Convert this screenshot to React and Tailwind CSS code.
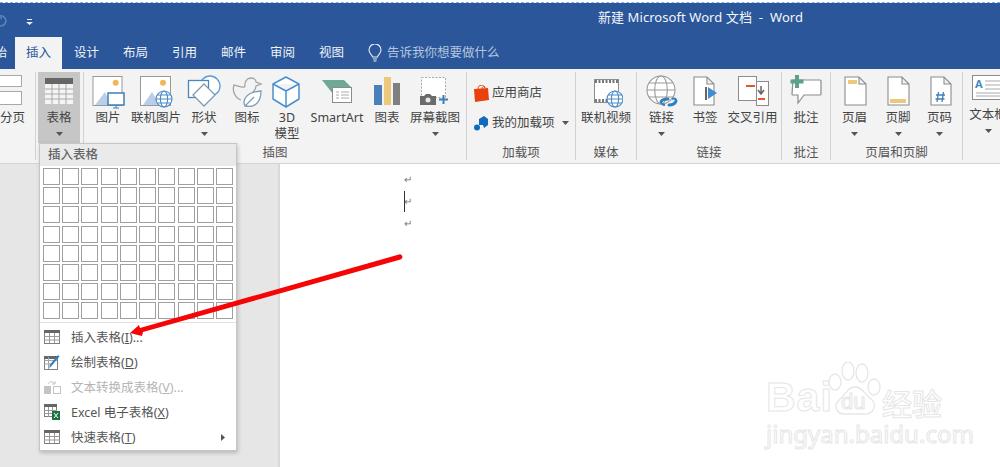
import React from "react";

const tabs = ["设计", "布局", "引用", "邮件", "审阅", "视图"];
const rows = Array.from({ length: 80 });

const Caret = ({ className = "" }) => (
  <svg width="7" height="4" viewBox="0 0 7 4" className={className}>
    <path d="M0 0h7L3.5 4z" fill="#555" />
  </svg>
);

const Icon = ({ children, w = 34 }) => (
  <svg width={w} height="34" viewBox={`0 0 ${w} 34`} className="mb-[1px] shrink-0">
    {children}
  </svg>
);

const Globe = ({ x, y, r, color = "#4a8ac9" }) => (
  <g fill="#fff" stroke={color} strokeWidth="1.1">
    <circle cx={x} cy={y} r={r} />
    <ellipse cx={x} cy={y} rx={r * 0.45} ry={r} fill="none" />
    <path d={`M${x - r} ${y}h${r * 2}M${x - r * 0.85} ${y - r * 0.5}h${r * 1.7}M${x - r * 0.85} ${y + r * 0.5}h${r * 1.7}`} fill="none" />
  </g>
);

const Doc = ({ x = 7, w = 21 }) => (
  <path d={`M${x} 2h${w - 7}l7 7v21h-${w}z M${x + w - 7} 2v7h7`} fill="#fff" stroke="#8c8c8c" strokeWidth="1.1" />
);

const RibbonItem = ({ className, label, line2, caret, icon }) => (
  <div className={`flex flex-col items-center pt-[3px] text-[12.5px] leading-[16px] text-[#444] whitespace-nowrap ${className}`}>
    {icon}
    <span>{label}</span>
    {line2 && <span>{line2}</span>}
    {caret && <Caret className="mt-[6px]" />}
  </div>
);

const Group = ({ className, label, children }) => (
  <div className={`my-[3px] flex flex-col border-r border-[#d2d2d2] shrink-0 ${className}`}>
    <div className="flex h-[73px]">{children}</div>
    <div className="h-[15px] text-center text-[12.5px] leading-[16px] text-[#555] whitespace-nowrap">{label}</div>
  </div>
);

const TableGlyph = () => (
  <svg width="16" height="14" viewBox="0 0 16 14">
    <rect x="0.5" y="0.5" width="15" height="13" fill="#fff" stroke="#7f7f7f" />
    <rect x="0" y="0" width="16" height="3" fill="#666" />
    <path d="M5.5 3v10M10.5 3v10M0 6.5h16M0 10h16" stroke="#9a9a9a" />
  </svg>
);

const MenuItem = ({ icon, disabled, children, arrow }) => (
  <div className={`flex h-[25px] items-center text-[12.5px] ${disabled ? "text-[#b5b5b5]" : "text-[#555]"}`}>
    <div className="flex w-[31px] justify-start pl-[4px]">{icon}</div>
    <span className="whitespace-nowrap pt-[2px]">{children}</span>
    {arrow && (
      <svg width="4" height="7" viewBox="0 0 4 7" className="ml-auto mr-[11px]">
        <path d="M0 0l4 3.5L0 7z" fill="#555" />
      </svg>
    )}
  </div>
);

export default function App() {
  return (
    <div className="relative flex h-[467px] w-[1000px] flex-col overflow-hidden bg-white font-['Noto_Sans','Noto_Sans_CJK_SC',sans-serif]">
      {/* title bar */}
      <div className="h-[3px] shrink-0 border-b border-dashed border-[#7fb3e6] bg-white" />
      <div className="relative flex h-[34px] shrink-0 items-center bg-[#2b579a] pb-[4px] pl-[598px] text-[13px] tracking-[0.07px] text-[#f2f5fa] whitespace-pre">
        <svg width="9" height="13" viewBox="0 0 9 13" className="absolute left-0 top-[11px]">
          <path d="M0 2a5 5 0 1 1-2 9" fill="none" stroke="#5f82b8" strokeWidth="1.6" />
          <path d="M-2 0v4h4" fill="none" stroke="#5f82b8" strokeWidth="1.4" />
        </svg>
        <svg width="7" height="6" viewBox="0 0 7 6" className="absolute left-[26px] top-[16px]">
          <path d="M1 0h5v1H1zM0 3h7L3.5 6z" fill="#e8eef6" />
        </svg>
        新建 Microsoft Word 文档  -  Word
      </div>

      {/* tabs */}
      <div className="flex h-[32px] shrink-0 items-center bg-[#2b579a] text-[12.5px] text-[#f0f3f8]">
        <div className="flex h-full w-[15px] items-center justify-end overflow-hidden whitespace-nowrap pr-[8px]">开始</div>
        <div className="flex h-full w-[47px] items-center justify-center bg-[#f3f3f3] text-[#2b579a]">插入</div>
        {tabs.map((t) => (
          <div key={t} className="w-[49px] text-center">{t}</div>
        ))}
        <svg width="14" height="19" viewBox="0 0 14 19" className="ml-[12px]">
          <path d="M4.5 13C4 10.5 1 9.5 1 6a6 6 0 0 1 12 0c0 3.500-3 4.500-3.500 7z" fill="none" stroke="#e8eef6" strokeWidth="1.1" />
          <path d="M5 15h4M5.500 17h3" stroke="#e8eef6" strokeWidth="1.2" />
        </svg>
        <span className="ml-[5px] text-[#b4c5df]">告诉我你想要做什么</span>
      </div>

      {/* ribbon */}
      <div className="flex h-[95px] shrink-0 border-b border-[#d4d4d4] bg-[#f3f3f3]">
        <Group className="w-[36px]">
          <div className="flex w-[35px] flex-col pt-[3px] text-[12.5px] leading-[16px] text-[#444]">
            <div className="h-[12px] w-[22px] border border-l-0 border-[#a8a8a8] bg-white" />
            <div className="mt-[4px] h-[14px] w-[22px] border border-l-0 border-[#a8a8a8] bg-white" />
            <span className="mt-[5px] whitespace-nowrap">分页</span>
          </div>
        </Group>

        <Group className="w-[48px]">
          <div className="ml-[2px] flex h-[71px] w-[42px] flex-col items-center bg-[#c6c6c6] pt-[6px] text-[12.5px] leading-[16px] text-[#444]">
            <svg width="28" height="26" viewBox="0 0 28 26">
              <rect width="28" height="26" fill="#f4f4f4" />
              <rect width="28" height="6" fill="#666" />
              <path d="M7 6v20M14 6v20M21 6v20M0 11h28M0 16h28M0 21h28" stroke="#aaa" />
            </svg>
            <span className="mt-[6px]">表格</span>
            <Caret className="mt-[6px]" />
          </div>
        </Group>

        <Group className="w-[383px]" label="插图">
          <RibbonItem className="w-[48px]" label="图片" icon={
            <Icon>
              <rect x="2" y="1.500" width="29" height="29" fill="#fff" stroke="#999" />
              <circle cx="24.700" cy="7.700" r="3" fill="#efb75c" />
              <path d="M4 30l10-13 6 13z" fill="#b9cfe9" />
              <rect x="17" y="18" width="16" height="12" fill="#fff" stroke="#3f7fb8" strokeWidth="1.500" />
              <path d="M25 30v3M22 33h6" stroke="#3f7fb8" />
            </Icon>
          } />
          <RibbonItem className="w-[48px]" label="联机图片" icon={
            <Icon>
              <rect x="1.500" y="1.500" width="30" height="29" fill="#fff" stroke="#999" />
              <circle cx="24" cy="7.700" r="3" fill="#efb75c" />
              <path d="M4 30l9-13 8 13z" fill="#b9cfe9" />
              <Globe x={25} y={24} r={8} />
            </Icon>
          } />
          <RibbonItem className="w-[48px]" label="形状" caret icon={
            <Icon>
              <circle cx="23" cy="11" r="10" fill="#fff" stroke="#5b9bd5" strokeWidth="1.300" />
              <rect x="1.500" y="5.500" width="20" height="17" fill="#fff" stroke="#4a86c0" strokeWidth="1.300" />
              <path d="M17 9l11 11-11 11-11-11z" fill="#fff" stroke="#8299b3" strokeWidth="1.300" />
            </Icon>
          } />
          <RibbonItem className="w-[38px]" label="图标" icon={
            <Icon>
              <path d="M15 12c-1-5 2-9 6-9 3 0 5 2 5 4l5 2-5 2c0 3-2 5-3 6M15 12c-3 1-7-1-11-2-2 6 1 13 7 15" fill="none" stroke="#a3a3a3" strokeWidth="1.300" />
              <path d="M15 31c-3-6 1-14 16-15 0 12-7 17-16 15zM15 31l9-9" fill="#fff" stroke="#7f9db3" strokeWidth="1.300" />
            </Icon>
          } />
          <RibbonItem className="w-[42px]" label="3D" line2="模型" icon={
            <Icon>
              <path d="M16 2l13 7v15l-13 8-13-8V9zM3 9l13 7 13-7M16 16v16" fill="#fff" stroke="#4a90d0" strokeWidth="1.500" strokeLinejoin="round" />
            </Icon>
          } />
          <RibbonItem className="w-[58px]" label="SmartArt" icon={
            <Icon>
              <path d="M2 5h22l7 7H13v7z" fill="#6fa896" />
              <rect x="12.500" y="12.500" width="19" height="15" fill="#fff" stroke="#8c8c8c" />
              <path d="M16 17h3M21 17h8M16 20h3M21 20h8M16 23h3M21 23h8" stroke="#aaa" />
            </Icon>
          } />
          <RibbonItem className="w-[42px]" label="图表" icon={
            <Icon>
              <rect x="4" y="10" width="8" height="20" fill="#4a7fb8" />
              <rect x="14" y="2" width="7" height="28" fill="#edc77a" />
              <rect x="23" y="8" width="7" height="22" fill="#7f7f7f" />
            </Icon>
          } />
          <RibbonItem className="w-[54px]" label="屏幕截图" caret icon={
            <Icon>
              <rect x="3.500" y="2.500" width="24" height="20" fill="#fff" stroke="#aaa" strokeDasharray="2 1.500" />
              <path d="M2 21h4l2-2h4l2 2h4v9H2z" fill="#6b6b6b" />
              <circle cx="10" cy="25" r="2.500" fill="#e8e8e8" />
              <path d="M21 24.500h9M25.500 20v9" stroke="#3f7fb8" strokeWidth="2" />
            </Icon>
          } />
        </Group>

        <Group className="w-[109px]" label="加载项">
          <div className="flex flex-col pl-[7px] pt-[11px] text-[12.5px] text-[#444]">
            <div className="flex h-[20px] items-center gap-[3px] whitespace-nowrap">
              <svg width="15" height="17" viewBox="0 0 15 17">
                <path d="M0 4l14-1 1 12-14 2z" fill="#e8410c" />
                <path d="M4 4c0-5 6-5 7-1M8 4c0-3 3-3 3-1" fill="none" stroke="#e8410c" />
              </svg>
              应用商店
            </div>
            <div className="mt-[10px] flex h-[20px] items-center gap-[3px] whitespace-nowrap">
              <svg width="15" height="15" viewBox="0 0 15 15">
                <path d="M5 3l5-3 4 3v6l-4 3-1-3H5z" fill="#0f6cbd" />
                <circle cx="3" cy="11.500" r="3" fill="#0f6cbd" />
              </svg>
              我的加载项
              <Caret className="ml-[4px]" />
            </div>
          </div>
        </Group>

        <Group className="w-[61px]" label="媒体">
          <RibbonItem className="w-[60px]" label="联机视频" icon={
            <Icon>
              <rect x="5.500" y="4.500" width="24" height="23" fill="#fff" stroke="#8c8c8c" />
              <path d="M6 6.500h23M6 25.500h23" stroke="#777" strokeWidth="3" strokeDasharray="2 1.500" />
              <Globe x={26} y={24} r={8} />
            </Icon>
          } />
        </Group>

        <Group className="w-[145px]" label="链接">
          <RibbonItem className="w-[49px]" label="链接" caret icon={
            <Icon>
              <Globe x={16} y={15} r={14} color="#999" />
              <path d="M16 27c1-3 4-3 7-3M24 30c3 0 6-1 7-4" fill="none" stroke="#2f7fc1" strokeWidth="3" strokeLinecap="round" />
              <path d="M20 30c-2 0-3-1-3-2M27 24c2-1 4 0 4 1" fill="none" stroke="#2f7fc1" strokeWidth="2" />
            </Icon>
          } />
          <RibbonItem className="w-[38px]" label="书签" icon={
            <Icon>
              <Doc x={6} w={20} />
              <path d="M18 12v13" stroke="#666" strokeWidth="2" />
              <path d="M20 12l9 6-9 6z" fill="#3f8fd0" />
            </Icon>
          } />
          <RibbonItem className="w-[57px]" label="交叉引用" icon={
            <Icon>
              <rect x="20.500" y="6.500" width="12" height="24" fill="#fff" stroke="#8c8c8c" />
              <rect x="2.500" y="1.500" width="18" height="24" fill="#fff" stroke="#8c8c8c" />
              <path d="M10 11h9M22 24h7" stroke="#e4572e" strokeWidth="2" />
              <path d="M25 11v7M22 15l3 4 3-4" fill="none" stroke="#666" strokeWidth="1.500" />
            </Icon>
          } />
        </Group>

        <Group className="w-[49px]" label="批注">
          <RibbonItem className="w-[48px]" label="批注" icon={
            <Icon>
              <path d="M4 5h27a1 1 0 0 1 1 1v13a1 1 0 0 1-1 1H15l-6 8v-8H4a1 1 0 0 1-1-1z" fill="#fff" stroke="#8c8c8c" strokeWidth="1.200" />
              <path d="M8 0v13M1.500 6.500h13" stroke="#5fa08a" strokeWidth="4" />
            </Icon>
          } />
        </Group>

        <Group className="w-[132px]" label="页眉和页脚">
          <RibbonItem className="w-[47px]" label="页眉" caret icon={
            <Icon>
              <Doc />
              <rect x="10" y="5" width="9" height="4" fill="#edc77a" />
            </Icon>
          } />
          <RibbonItem className="w-[40px]" label="页脚" caret icon={
            <Icon>
              <Doc />
              <rect x="9" y="24" width="16" height="4" fill="#edc77a" />
            </Icon>
          } />
          <RibbonItem className="w-[43px]" label="页码" caret icon={
            <Icon>
              <Doc x={8} w={20} />
              <path d="M15.500 17l-1.500 10M20.500 17l-1.500 10M13 20h9M12.500 24h9" stroke="#3f7fb8" strokeWidth="1.300" />
            </Icon>
          } />
        </Group>

        <RibbonItem className="w-[50px] shrink-0" label="文本框" caret icon={
          <Icon w={36}>
            <rect x="2.500" y="3.500" width="40" height="24" fill="#fff" stroke="#8c8c8c" />
            <text x="5" y="16" fontSize="11" fontWeight="700" fill="#4a86c0">A</text>
            <path d="M15 9h20M15 13h20M15 17h20M6 21h30M6 24h30" stroke="#aaa" />
          </Icon>
        } />
      </div>

      {/* document area */}
      <div className="flex min-h-0 flex-1">
        <div className="w-[280px] shrink-0 border-r-2 border-[#d9d9d9] bg-[#e6e6e6]" />
        <div className="relative flex-1 bg-white pl-[124px] pt-[4px] text-[10px] leading-[22px] text-[#777]">
          <div className="h-[22px]">↵</div>
          <div className="h-[22px]">↵</div>
          <div className="h-[22px]">↵</div>
          <div className="absolute left-[124px] top-[27px] h-[21px] w-px bg-[#333]" />
        </div>
      </div>

      {/* table dropdown */}
      <div className="absolute left-[39px] top-[143px] w-[198px] border border-[#c6c6c6] bg-white shadow-[1px_2px_4px_rgba(0,0,0,0.2)]">
        <div className="h-[22px] bg-[#eaeaea] pl-[8px] text-[12.5px] font-medium leading-[21px] text-[#666]">插入表格</div>
        <div className="grid grid-cols-10 gap-[2.200px] pl-[3px] pr-[3px] pt-[2px]">
          {rows.map((_, i) => (
            <div key={i} className="h-[17px] w-[17px] border-[1.500px] border-[#a0a0a0] bg-white" />
          ))}
        </div>
        <div className="mt-[2.500px] h-px bg-[#e2e2e2]" />
        <div className="pt-[2px]">
          <MenuItem icon={<TableGlyph />}>插入表格(<u>I</u>)...</MenuItem>
          <MenuItem icon={
            <svg width="16" height="16" viewBox="0 0 16 16">
              <rect x="0.500" y="2.500" width="13" height="13" fill="#fff" stroke="#7f7f7f" />
              <rect y="2" width="14" height="3" fill="#666" />
              <path d="M5 6.500h8M5 10h4M4.500 3v12M0.500 6.500h4M0.500 10h4" stroke="#a5a5a5" />
              <path d="M5 14l1-3.500L14 1l1.500 1.500L7 12.500z" fill="#2f7fc1" />
            </svg>
          }>绘制表格(<u>D</u>)</MenuItem>
          <MenuItem disabled icon={
            <svg width="17" height="16" viewBox="0 0 17 16">
              <rect y="7" width="7" height="8" fill="#c4c4c4" />
              <rect x="9.500" y="7.500" width="7" height="7" fill="#fff" stroke="#c4c4c4" />
              <path d="M4 5c1-3 5-3 7 0M11 2v3H8" fill="none" stroke="#c4c4c4" />
            </svg>
          }>文本转换成表格(<u>V</u>)...</MenuItem>
          <MenuItem icon={
            <svg width="16" height="16" viewBox="0 0 16 16">
              <rect x="0.500" y="0.500" width="12" height="12" fill="#fff" stroke="#7f7f7f" />
              <rect width="13" height="3" fill="#666" />
              <path d="M4.500 3v10M8.500 3v10M0 6.500h13M0 9.500h13" stroke="#9a9a9a" />
              <rect x="8" y="7" width="8" height="9" fill="#1e7145" />
              <path d="M10 9l4 5M14 9l-4 5" stroke="#fff" />
            </svg>
          }>Excel 电子表格(<u>X</u>)</MenuItem>
          <MenuItem arrow icon={<TableGlyph />}>快速表格(<u>T</u>)</MenuItem>
        </div>
      </div>

      {/* annotation arrow */}
      <svg width="1000" height="467" viewBox="0 0 1000 467" className="pointer-events-none absolute left-0 top-0">
        <path d="M399 254.500a2.600 2.600 0 0 1 1.500 5L143 332l-1 4-12-3 9-8 1 3z" fill="#f50505" />
      </svg>

      {/* watermark */}
      <div className="absolute left-[766px] top-[362px] w-[190px] text-transparent [-webkit-text-stroke:1px_#e6e6e6]">
        <svg width="60" height="58" viewBox="0 0 60 58" className="absolute left-[62px] top-0" fill="#fff" stroke="#e6e6e6" strokeWidth="1.300">
          <ellipse cx="7" cy="20" rx="6" ry="8" />
          <ellipse cx="20" cy="9" rx="6" ry="9" />
          <ellipse cx="34" cy="11" rx="6" ry="9" />
          <ellipse cx="46" cy="25" rx="6" ry="8" />
          <path d="M27 25c8 0 11 9 17 13 6 6 0 15-8 14H18c-9 1-13-8-7-14 6-4 8-13 16-13z" />
        </svg>
        <div className="relative flex h-[55px] items-end font-['Liberation_Sans',sans-serif] text-[41px] font-bold leading-[40px]">
          <span className="w-[75px] tracking-[1px]">Bai</span>
          <span className="w-[41px] text-[22px] font-normal leading-[30px]">du</span>
          <span className="font-['Noto_Sans_CJK_SC',sans-serif] text-[30px] font-medium leading-[30px]">经验</span>
        </div>
        <div className="mt-[2px] font-['Noto_Sans',sans-serif] text-[24px] leading-[30px] whitespace-nowrap">jingyan.baidu.com</div>
      </div>
    </div>
  );
}
